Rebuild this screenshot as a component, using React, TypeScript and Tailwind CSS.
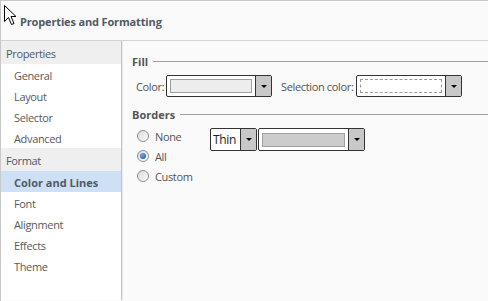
import React from 'react'

const font = "font-['Open_Sans',sans-serif]"
const txt = 'text-[11px] tracking-[-0.35px] whitespace-nowrap'

function Arrow() {
  return (
    <span className="block h-0 w-0 border-x-[3px] border-t-[3px] border-x-transparent border-t-black" />
  )
}

function DropButton() {
  return (
    <div className="flex w-[16px] shrink-0 flex-col items-center justify-center border-l border-[#333] bg-[#c8c8c8]">
      <Arrow />
    </div>
  )
}

function Radio({ checked, label }: { checked?: boolean; label: string }) {
  return (
    <div className="flex h-[20px] items-center gap-[6px]">
      <span className="flex h-[12px] w-[12px] items-center justify-center rounded-full border border-[#8e8f8f] bg-gradient-to-br from-[#dcdcdc] to-[#fbfbfb]">
        {checked && (
          <span className="block h-[6px] w-[6px] rounded-full bg-[radial-gradient(circle_at_40%_35%,#6fa8ec,#1a4f9e)]" />
        )}
      </span>
      <span className={`${txt} pt-[2px] text-[#555]`}>{label}</span>
    </div>
  )
}

function Legend({ text }: { text: string }) {
  return (
    <div className="flex h-[14px] items-center">
      <span className="pt-[2px] text-[11px] font-bold text-[#555]">{text}</span>
      <span className="ml-[5px] h-px flex-1 bg-[#a0a0a0]" />
    </div>
  )
}

const sections = [
  { title: 'Properties', items: ['General', 'Layout', 'Selector', 'Advanced'] },
  { title: 'Format', items: ['Color and Lines', 'Font', 'Alignment', 'Effects', 'Theme'] },
]

export default function App() {
  return (
    <div className={`relative h-[301px] w-[488px] overflow-hidden border-l border-t border-[#c8c8c8] bg-[#fafafa] ${font}`}>
      {/* cursor */}
      <svg className="absolute left-[3px] top-[4px]" width="14" height="21" viewBox="0 0 14 21">
        <path d="M0.5 0.5 L0.5 16.5 L4.5 12.5 L7.5 19.5 L10 18.5 L7 11.5 L12 11.5 Z" fill="#fff" stroke="#000" strokeWidth="1" />
      </svg>

      <div className="flex h-[40px] items-center border-b border-[#d4d4d4] pl-[19px] pt-[3px]">
        <span className="text-[11px] font-bold tracking-[-0.15px] text-[#505a66]">Properties and Formatting</span>
      </div>

      <div className="flex h-[259px]">
        {/* sidebar */}
        <div className="w-[121px] shrink-0 border-r border-[#c4c4c4] bg-white">
          {sections.map((s) => (
            <div key={s.title}>
              <div className={`flex h-[23px] items-center bg-[#efefef] pl-[5px] pt-[3px] ${txt} text-[#505a66]`}>{s.title}</div>
              {s.items.map((it) => {
                const active = it === 'Color and Lines'
                return (
                  <div
                    key={it}
                    className={`flex h-[21px] items-center pl-[13px] pt-[3px] text-[11px] whitespace-nowrap ${
                      active ? 'bg-[#cde0f6] font-bold text-[#505a66]' : 'tracking-[-0.35px] text-[#5a5a5a]'
                    }`}
                  >
                    {it}
                  </div>
                )
              })}
            </div>
          ))}
        </div>

        {/* content */}
        <div className="flex-1 border-l border-[#eaeaea] pl-[9px] pt-[13px]">
          <Legend text="Fill" />
          <div className="mt-[7px] flex h-[22px] items-center pl-[4px]">
            <span className={`w-[30px] pt-[2px] ${txt} text-[#555]`}>Color:</span>
            <div className="flex h-[22px] w-[106px] rounded-[2px] border border-[#333] bg-white">
              <div className="flex flex-1 items-center px-[3px]">
                <div className="h-[14px] w-full border border-[#a0a0a0] bg-[#ededed]" />
              </div>
              <DropButton />
            </div>
            <span className={`ml-[9px] w-[75px] pt-[2px] ${txt} text-[#555]`}>Selection color:</span>
            <div className="flex h-[22px] w-[106px] rounded-[2px] border border-[#333] bg-white">
              <div className="flex flex-1 items-center px-[3px]">
                <div className="h-[14px] w-full border border-dashed border-[#999] bg-white" />
              </div>
              <DropButton />
            </div>
          </div>

          <div className="mt-[10px]">
            <Legend text="Borders" />
          </div>
          <div className="mt-[5px] flex">
            <div className="w-[78px] pl-[5px]">
              <Radio label="None" />
              <Radio checked label="All" />
              <Radio label="Custom" />
            </div>
            <div className="mt-[2px] flex h-[23px] gap-[1px]">
              <div className="flex w-[47px] rounded-[2px] border border-[#333] bg-white">
                <span className="flex flex-1 items-center pl-[2px] pt-[1px] text-[12px] tracking-[-0.3px] text-[#222]">Thin</span>
                <DropButton />
              </div>
              <div className="flex w-[107px] rounded-[2px] border border-[#333] bg-white">
                <div className="flex flex-1 items-center px-[3px]">
                  <div className="h-[14px] w-full border border-[#a0a0a0] bg-[#cccccc]" />
                </div>
                <DropButton />
              </div>
            </div>
          </div>
        </div>
      </div>
    </div>
  )
}
